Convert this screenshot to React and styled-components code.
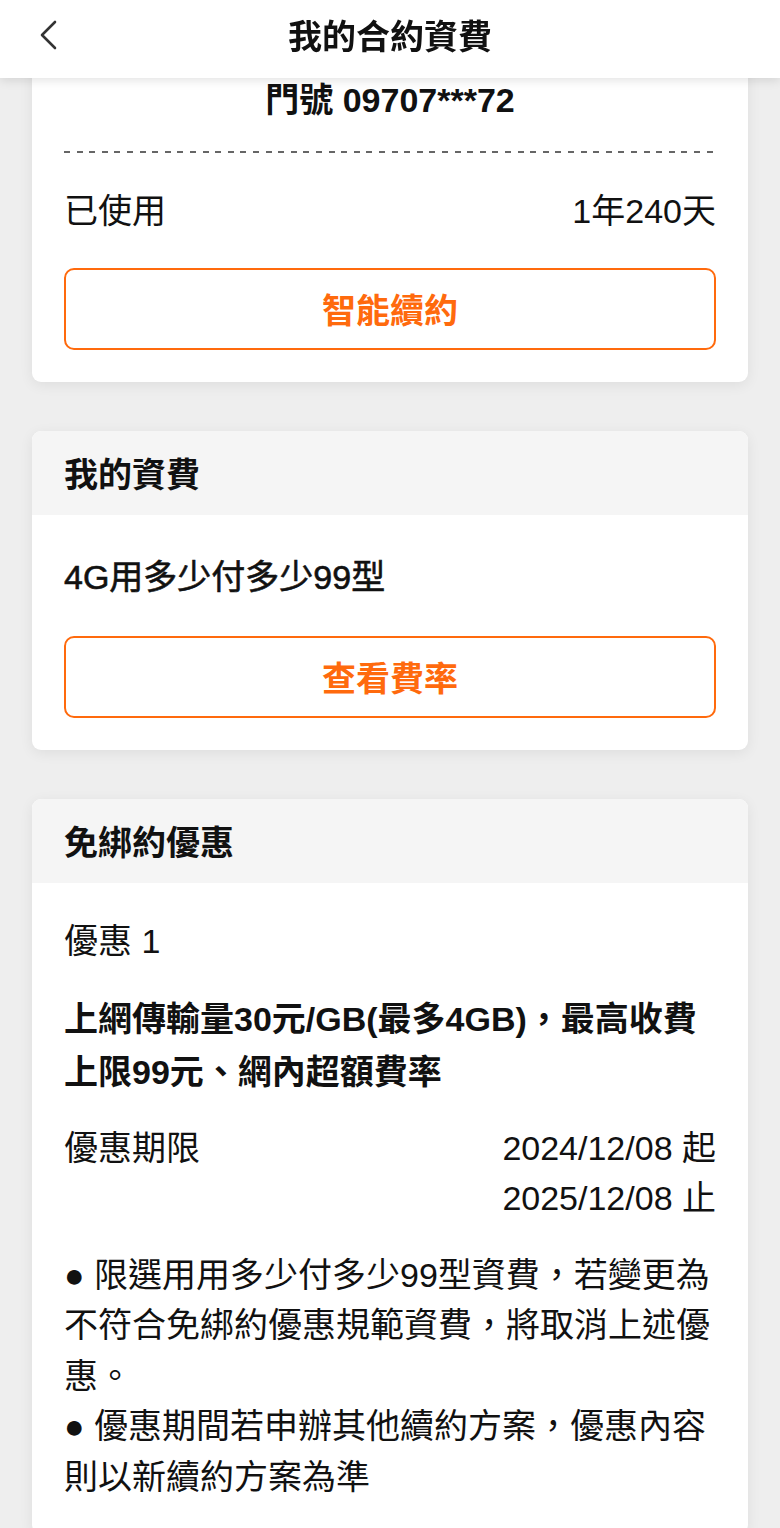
import styled, { createGlobalStyle } from "styled-components";

const GlobalStyle = createGlobalStyle`
  html, body {
    margin: 0;
    padding: 0;
    background: #eeeeee;
  }
  body {
    font-family: "Liberation Sans", "Noto Sans CJK TC", sans-serif;
    color: #111;
    -webkit-font-smoothing: antialiased;
  }
  * {
    box-sizing: border-box;
  }
`;

const App = () => {
  return (
    <>
      <GlobalStyle />
      <TopBar>
        <BackButton aria-label="返回">
          <svg width="22" height="30" viewBox="0 0 22 30" fill="none">
            <path
              d="M17 2 L4 15 L17 28"
              stroke="#333"
              strokeWidth="2.6"
              strokeLinecap="round"
              strokeLinejoin="round"
            />
          </svg>
        </BackButton>
        <PageTitle>我的合約資費</PageTitle>
        <span />
      </TopBar>

      <Page>
        <ContractCard>
          <PhoneLine>門號 09707***72</PhoneLine>
          <Dashed />
          <InfoRow>
            <span>已使用</span>
            <span>1年240天</span>
          </InfoRow>
          <OutlineButton $top={33}>智能續約</OutlineButton>
        </ContractCard>

        <Card>
          <CardHeader>我的資費</CardHeader>
          <CardBody $top={38}>
            <PlanName>4G用多少付多少99型</PlanName>
            <OutlineButton $top={35}>查看費率</OutlineButton>
          </CardBody>
        </Card>

        <Card>
          <CardHeader>免綁約優惠</CardHeader>
          <CardBody $top={34}>
            <OfferLabel>優惠 1</OfferLabel>
            <OfferTitle>
              上網傳輸量30元/GB(最多4GB)，最高收費上限99元、網內超額費率
            </OfferTitle>
            <PeriodRow>
              <span>優惠期限</span>
              <PeriodDates>
                <span>2024/12/08 起</span>
                <span>2025/12/08 止</span>
              </PeriodDates>
            </PeriodRow>
            <Notes>
              <p>● 限選用用多少付多少99型資費，若變更為不符合免綁約優惠規範資費，將取消上述優惠。</p>
              <p>● 優惠期間若申辦其他續約方案，優惠內容則以新續約方案為準</p>
            </Notes>
          </CardBody>
        </Card>
      </Page>
    </>
  );
};

const TopBar = styled.header`
  position: fixed;
  top: 0;
  left: 0;
  right: 0;
  z-index: 10;
  height: 78px;
  background: #fff;
  box-shadow: 0 2px 10px rgba(0, 0, 0, 0.12);
  display: grid;
  grid-template-columns: 1fr auto 1fr;
  align-items: center;
`;

const BackButton = styled.button`
  justify-self: start;
  margin-left: 38px;
  margin-top: -8px;
  padding: 0;
  border: none;
  background: none;
  display: flex;
  cursor: pointer;
`;

const PageTitle = styled.h1`
  margin: -10px 0 0;
  font-size: 34px;
  font-weight: 700;
  color: #111;
`;

const Page = styled.main`
  display: flex;
  flex-direction: column;
  gap: 49px;
  padding: 0 32px;
`;

const Card = styled.section`
  background: #fff;
  border-radius: 9px;
  box-shadow: 0 3px 14px rgba(0, 0, 0, 0.07);
  overflow: hidden;
`;

const ContractCard = styled(Card)`
  padding: 76px 32px 32px;
`;

const PhoneLine = styled.div`
  text-align: center;
  font-size: 34px;
  font-weight: 700;
  line-height: 48px;
`;

const Dashed = styled.div`
  margin-top: 27px;
  height: 1.5px;
  background: repeating-linear-gradient(
    to right,
    #666 0 6px,
    transparent 6px 12.6px
  );
`;

const InfoRow = styled.div`
  margin-top: 34px;
  display: flex;
  justify-content: space-between;
  font-size: 34px;
  line-height: 48px;
`;

const OutlineButton = styled.button`
  display: flex;
  align-items: center;
  justify-content: center;
  width: 100%;
  height: 82px;
  margin-top: ${(p) => p.$top}px;
  border: 2px solid #ff6a0d;
  border-radius: 10px;
  background: #fff;
  color: #ff6a0d;
  font-family: inherit;
  font-size: 34px;
  font-weight: 700;
  cursor: pointer;
`;

const CardHeader = styled.h2`
  margin: 0;
  height: 84px;
  padding: 0 32px;
  display: flex;
  align-items: center;
  background: #f5f5f5;
  font-size: 34px;
  font-weight: 700;
`;

const CardBody = styled.div`
  padding: ${(p) => p.$top}px 32px 32px;
`;

/* medium weight in the app font; thickened a little since only regular and bold are at hand */
const PlanName = styled.div`
  font-size: 34px;
  font-weight: 400;
  line-height: 48px;
  -webkit-text-stroke: 0.6px #111;
`;

const OfferLabel = styled.div`
  font-size: 34px;
  line-height: 48px;
`;

const OfferTitle = styled.div`
  margin-top: 28px;
  font-size: 34px;
  font-weight: 700;
  line-height: 53px;
`;

const PeriodRow = styled.div`
  margin-top: 24px;
  display: flex;
  justify-content: space-between;
  font-size: 34px;
  line-height: 50px;
`;

const PeriodDates = styled.div`
  display: flex;
  flex-direction: column;
  align-items: flex-end;
`;

const Notes = styled.div`
  margin-top: 27px;
  font-size: 34px;
  line-height: 50.5px;

  p {
    margin: 0;
  }
`;

export default App;
